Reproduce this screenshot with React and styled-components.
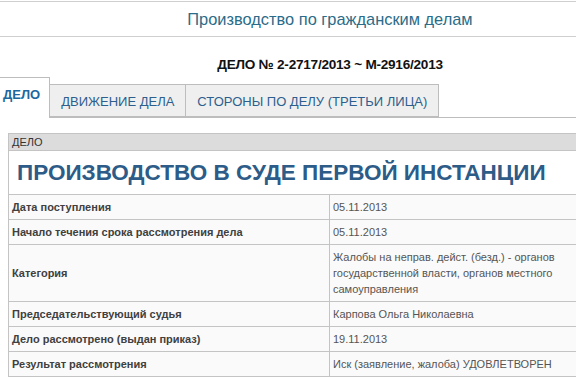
import React, { useState } from "react";
import styled, { createGlobalStyle } from "styled-components";

const GlobalStyle = createGlobalStyle`
  html, body {
    margin: 0;
    padding: 0;
    background: #fff;
    overflow: hidden;
  }
  body {
    font-family: "Liberation Sans", Arial, sans-serif;
  }
`;

const rows = [
  { label: "Дата поступления", value: "05.11.2013" },
  { label: "Начало течения срока рассмотрения дела", value: "05.11.2013" },
  {
    label: "Категория",
    value:
      "Жалобы на неправ. дейст. (безд.) - органов государственной власти, органов местного самоуправления",
  },
  { label: "Председательствующий судья", value: "Карпова Ольга Николаевна" },
  { label: "Дело рассмотрено (выдан приказ)", value: "19.11.2013" },
  { label: "Результат рассмотрения", value: "Иск (заявление, жалоба) УДОВЛЕТВОРЕН" },
];

const tabs = ["ДЕЛО", "ДВИЖЕНИЕ ДЕЛА", "СТОРОНЫ ПО ДЕЛУ (ТРЕТЬИ ЛИЦА)"];

const App = () => {
  const [active, setActive] = useState(0);

  return (
    <Page>
      <GlobalStyle />
      <TopBar>
        <PageTitle>Производство по гражданским делам</PageTitle>
      </TopBar>

      <CaseNumber>ДЕЛО № 2-2717/2013 ~ М-2916/2013</CaseNumber>

      <TabBar>
        {tabs.map((t, i) => (
          <Tab key={t} active={i === active} onClick={() => setActive(i)}>
            {t}
          </Tab>
        ))}
      </TabBar>

      <Panel>
        <Table>
          <tbody>
            <tr>
              <SectionHead colSpan={2}>ДЕЛО</SectionHead>
            </tr>
            <tr>
              <BigTitle colSpan={2}>ПРОИЗВОДСТВО В СУДЕ ПЕРВОЙ ИНСТАНЦИИ</BigTitle>
            </tr>
            {rows.map((r) => (
              <tr key={r.label}>
                <Label>{r.label}</Label>
                <Value>{r.value}</Value>
              </tr>
            ))}
          </tbody>
        </Table>
      </Panel>
    </Page>
  );
};

const Page = styled.div`
  width: 576px;
  height: 390px;
  padding-top: 1px;
  box-sizing: border-box;
`;

const TopBar = styled.div`
  height: 34px;
  border-top: 1px solid #cfcfcf;
  border-bottom: 1px solid #cfcfcf;
  display: flex;
  align-items: center;
  justify-content: center;
  padding-left: 84px;
`;

const PageTitle = styled.h1`
  margin: 0;
  font-size: 16.4px;
  font-weight: normal;
  color: #2a6c89;
`;

const CaseNumber = styled.div`
  margin-top: 20px;
  height: 16px;
  padding-left: 84px;
  text-align: center;
  font-family: "Liberation Sans Narrow", "Liberation Sans", Arial, sans-serif;
  font-size: 13.6px;
  letter-spacing: -0.25px;
  font-weight: bold;
  line-height: 16px;
  color: #111;
`;

const TabBar = styled.div`
  margin-top: 4px;
  display: flex;
  align-items: flex-end;
  height: 40px;
  border-bottom: 1px solid #bdbdbd;
`;

const Tab = styled.div`
  box-sizing: border-box;
  height: ${({ active }) => (active ? "41px" : "33px")};
  margin-bottom: ${({ active }) => (active ? "-1px" : "0")};
  padding: ${({ active }) => (active ? "0 9px 8px 3px" : "1px 11px 0")};
  margin-left: ${({ active }) => (active ? "0" : "-1px")};
  display: flex;
  align-items: center;
  font-size: 13px;
  font-weight: ${({ active }) => (active ? "bold" : "normal")};
  color: ${({ active }) => (active ? "#2067a0" : "#2d5f8e")};
  background: ${({ active }) => (active ? "#fff" : "#efefef")};
  border: 1px solid #bdbdbd;
  border-left: ${({ active }) => (active ? "none" : "1px solid #bdbdbd")};
  border-bottom: ${({ active }) => (active ? "none" : "1px solid #bdbdbd")};
  cursor: pointer;
  white-space: nowrap;
`;

const Panel = styled.div`
  margin-top: 15px;
  margin-left: 8px;
  width: 568px;
`;

const Table = styled.table`
  width: 100%;
  border-collapse: collapse;
  border: 1px solid #c4c4c4;
  border-right: none;
  font-size: 11px;
`;

const SectionHead = styled.td`
  height: 16px;
  padding: 0 3px;
  background: #dcdcdc;
  color: #333;
  border-bottom: 1px solid #c4c4c4;
`;

const BigTitle = styled.td`
  height: 43px;
  padding: 0 8px;
  font-size: 22.5px;
  font-weight: bold;
  color: #2c5c87;
  background: #fff;
  border-bottom: 1px solid #c4c4c4;
  white-space: nowrap;
`;

const Label = styled.td`
  width: 314px;
  height: 24px;
  padding: 0 3px;
  font-weight: bold;
  color: #404040;
  background: #fafafa;
  border-bottom: 1px solid #c4c4c4;
  border-right: 1px solid #c4c4c4;
`;

const Value = styled.td`
  padding: 4px 3px;
  line-height: 16px;
  color: #555;
  background: #fafafa;
  border-bottom: 1px solid #c4c4c4;
`;

export default App;
